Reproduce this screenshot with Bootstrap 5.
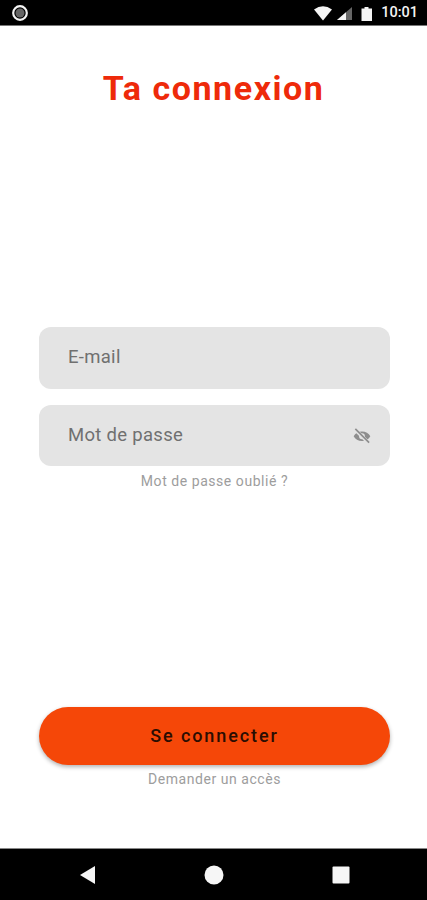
<!DOCTYPE html>
<html lang="fr">
<head>
    <meta charset="UTF-8">
    <meta name="viewport" content="width=device-width, initial-scale=1.0">
    <title>Ta connexion</title>
    <link href="https://cdn.jsdelivr.net/npm/bootstrap@5.3.2/dist/css/bootstrap.min.css" rel="stylesheet">
    <style>
        body {
            font-family: Roboto, "Liberation Sans", sans-serif;
            background-color: #fff;
        }

        .phone {
            width: 427px;
            height: 900px;
            overflow: hidden;
        }

        .status-bar {
            height: 26px;
            padding: 1px 9px 0 12px;
            background-color: #000;
            border-bottom: 1px solid #777;
            color: #f4f4f4;
        }

        .status-time {
            font-size: 14.5px;
            font-weight: 500;
            line-height: 1;
            margin-left: 8px;
        }

        .page-title {
            margin: 41px 0 0;
            height: 42px;
            color: #ee2a0a;
            font-size: 34px;
            font-weight: 700;
            line-height: 42px;
            letter-spacing: 1.55px;
        }

        .login-form {
            margin: 218px 37px 0 39px;
        }

        .login-field {
            height: 62px;
            padding: 0 18px 0 29px;
            background-color: #e4e4e4;
            border-radius: 12px;
            color: #707070;
            font-size: 18.5px;
            letter-spacing: .3px;
        }

        .login-field + .login-field {
            margin-top: 16px;
            height: 61px;
        }

        .small-link {
            color: #9d9d9d;
            font-size: 14px;
            line-height: 18px;
            letter-spacing: .55px;
        }

        .forgot-link {
            margin-top: 6px;
        }

        .connect-btn {
            margin-top: 217px;
            height: 58px;
            padding-bottom: 2px;
            background-color: #f54708;
            border-radius: 29px;
            box-shadow: 0 2px 4px rgba(0, 0, 0, .3);
            color: #2a0d02;
            font-size: 18px;
            font-weight: 500;
            letter-spacing: 1.9px;
        }

        .ask-link {
            margin-top: 5px;
        }

        .nav-bar {
            height: 52px;
            padding: 0 77px 0 79px;
            background-color: #000;
            border-top: 1px solid #888;
            margin-top: auto;
        }
    </style>
</head>
<body>
<div class="phone d-flex flex-column">
    <div class="status-bar d-flex align-items-center justify-content-between">
        <svg width="18" height="18" viewBox="0 0 18 18">
            <circle cx="8" cy="9" r="6.800" fill="none" stroke="#f4f4f4" stroke-width="2.200"/>
            <circle cx="8" cy="9" r="4.500" fill="#666"/>
        </svg>
        <div class="d-flex align-items-center">
            <svg width="20" height="18" viewBox="0 0 20 18">
                <path d="M1 5.500Q10-.8 19 5.500L10 16.500Z" fill="#f4f4f4"/>
            </svg>
            <svg class="ms-1" width="16" height="18" viewBox="0 0 16 18">
                <path d="M0 16 15 3V16Z" fill="#666"/>
                <path d="M0 16 9 8.200V16Z" fill="#f4f4f4"/>
            </svg>
            <svg class="ms-2" width="12" height="18" viewBox="0 0 12 18">
                <path d="M.5 4.500H3.500V3H7.500V4.500H11V17H.5Z" fill="#f4f4f4"/>
            </svg>
            <span class="status-time">10:01</span>
        </div>
    </div>

    <h1 class="page-title text-center">Ta connexion</h1>

    <form class="login-form">
        <div class="login-field d-flex align-items-center">E-mail</div>
        <div class="login-field d-flex align-items-center justify-content-between">
            <span>Mot de passe</span>
            <svg width="20" height="20" viewBox="0 0 24 24">
                <path d="M12 6.500c-4.400 0-8.200 2.300-10 5.800 1.800 3.500 5.600 5.800 10 5.800s8.200-2.300 10-5.800c-1.800-3.500-5.600-5.800-10-5.800Zm0 9.300a3.500 3.500 0 1 1 0-7 3.500 3.500 0 0 1 0 7Z" fill="#8e8e8e"/>
                <path d="M4 4.500 20 20.500" stroke="#e4e4e4" stroke-width="4.200"/>
                <path d="M4 3.500 20.500 20" stroke="#8e8e8e" stroke-width="2"/>
            </svg>
        </div>
        <div class="small-link forgot-link text-center">Mot de passe oublié ?</div>
        <div class="connect-btn d-flex align-items-center justify-content-center">Se connecter</div>
        <div class="small-link ask-link text-center">Demander un accès</div>
    </form>

    <div class="nav-bar d-flex align-items-center justify-content-between">
        <svg width="16" height="20" viewBox="0 0 16 20"><path d="M16 1V19L1 10Z" fill="#f6f6f6"/></svg>
        <svg width="20" height="20" viewBox="0 0 20 20"><circle cx="10" cy="10" r="9.500" fill="#f6f6f6"/></svg>
        <svg width="18" height="18" viewBox="0 0 18 18"><rect x="0.500" y="0.500" width="17" height="17" rx="1" fill="#f6f6f6"/></svg>
    </div>
</div>
<script src="https://cdn.jsdelivr.net/npm/bootstrap@5.3.2/dist/js/bootstrap.bundle.min.js"></script>
</body>
</html>
